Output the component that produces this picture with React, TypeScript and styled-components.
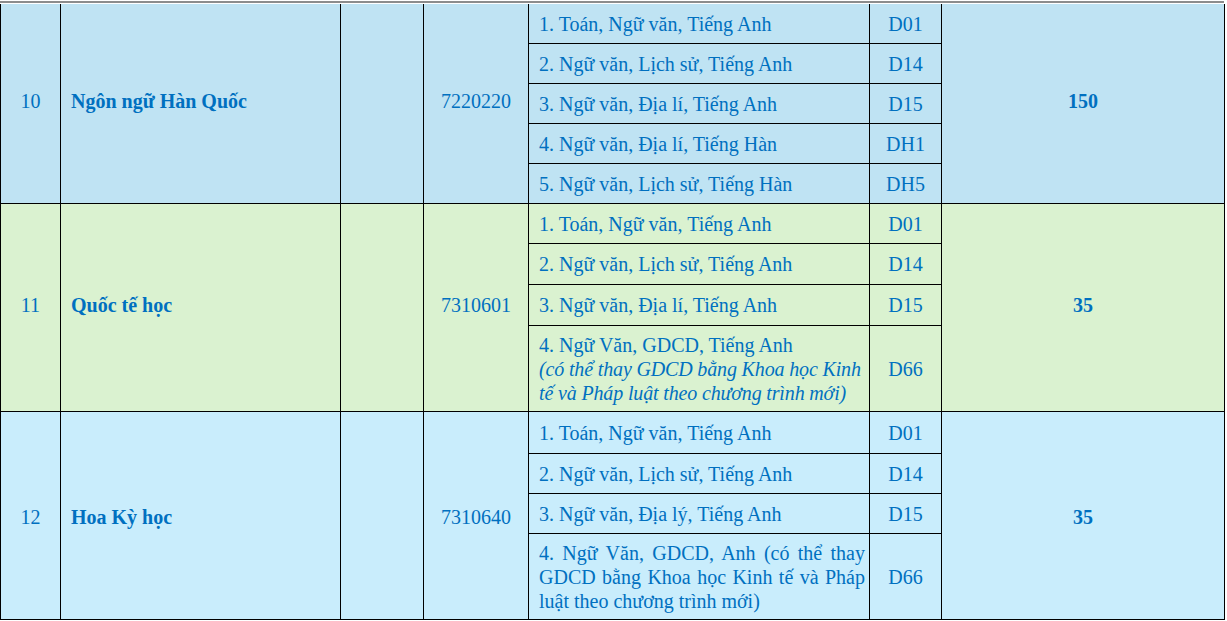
import React from "react";
import styled, { createGlobalStyle } from "styled-components";

type Subject = {
  text: React.ReactNode;
  block: string;
  justify?: boolean;
};

type Group = {
  no: string;
  name: string;
  code: string;
  quota: string;
  bg: string;
  lift: number;
  rows: number[];
  subjects: Subject[];
};

const GlobalStyle = createGlobalStyle`
  html, body {
    margin: 0;
    padding: 0;
    background: #ffffff;
  }
  body {
    font-family: "Liberation Serif", "Times New Roman", serif;
    color: #0070c0;
  }
`;

const groups: Group[] = [
  {
    no: "10",
    name: "Ngôn ngữ Hàn Quốc",
    code: "7220220",
    quota: "150",
    bg: "#bfe3f3",
    lift: 6,
    rows: [40, 40, 40, 40, 40],
    subjects: [
      { text: "1. Toán, Ngữ văn, Tiếng Anh", block: "D01" },
      { text: "2. Ngữ văn, Lịch sử, Tiếng Anh", block: "D14" },
      { text: "3. Ngữ văn, Địa lí, Tiếng Anh", block: "D15" },
      { text: "4. Ngữ văn, Địa lí, Tiếng Hàn", block: "DH1" },
      { text: "5. Ngữ văn, Lịch sử, Tiếng Hàn", block: "DH5" },
    ],
  },
  {
    no: "11",
    name: "Quốc tế học",
    code: "7310601",
    quota: "35",
    bg: "#daf2d0",
    lift: 6,
    rows: [40, 41, 41, 86],
    subjects: [
      { text: "1. Toán, Ngữ văn, Tiếng Anh", block: "D01" },
      { text: "2. Ngữ văn, Lịch sử, Tiếng Anh", block: "D14" },
      { text: "3. Ngữ văn, Địa lí, Tiếng Anh", block: "D15" },
      {
        text: (
          <>
            4. Ngữ Văn, GDCD, Tiếng Anh
            <br />
            <em>
              (có thể thay GDCD bằng Khoa học Kinh tế và Pháp luật theo chương
              trình mới)
            </em>
          </>
        ),
        block: "D66",
      },
    ],
  },
  {
    no: "12",
    name: "Hoa Kỳ học",
    code: "7310640",
    quota: "35",
    bg: "#c9edfc",
    lift: -2,
    rows: [42, 40, 40, 86],
    subjects: [
      { text: "1. Toán, Ngữ văn, Tiếng Anh", block: "D01" },
      { text: "2. Ngữ văn, Lịch sử, Tiếng Anh", block: "D14" },
      { text: "3. Ngữ văn, Địa lý, Tiếng Anh", block: "D15" },
      {
        text: "4. Ngữ Văn, GDCD, Anh (có thể thay GDCD bằng Khoa học Kinh tế và Pháp luật theo chương trình mới)",
        block: "D66",
        justify: true,
      },
    ],
  },
];

export default function App() {
  return (
    <>
      <GlobalStyle />
      <Table>
        <TopRule />
        {groups.map((g) => (
          <GroupGrid
            key={g.no}
            $bg={g.bg}
            $rows={g.rows.map((r) => `${r}px`).join(" ")}
          >
            <SpanCell $col={1} $lift={g.lift} $center>
              {g.no}
            </SpanCell>
            <SpanCell $col={2} $lift={g.lift}>
              <Bold>{g.name}</Bold>
            </SpanCell>
            <SpanCell $col={3} $lift={g.lift} $center />
            <SpanCell $col={4} $lift={g.lift} $center>
              {g.code}
            </SpanCell>
            {g.subjects.map((s, i) => (
              <React.Fragment key={i}>
                <SubjectCell style={{ gridRow: i + 1 }} $justify={s.justify}>
                  <span>{s.text}</span>
                </SubjectCell>
                <BlockCell style={{ gridRow: i + 1 }}>{s.block}</BlockCell>
              </React.Fragment>
            ))}
            <SpanCell $col={7} $lift={g.lift} $center>
              <Bold>{g.quota}</Bold>
            </SpanCell>
          </GroupGrid>
        ))}
      </Table>
    </>
  );
}

const Table = styled.div`
  width: 1225px;
  display: flex;
  flex-direction: column;
  font-size: 20px;
  line-height: 24px;
`;

const TopRule = styled.div`
  height: 4px;
  box-sizing: border-box;
  border-top: 1px solid #ffffff;
  border-bottom: 1px solid #ffffff;
  background: #8c8c8c;
  margin: 0 1px 0 0;
`;

const GroupGrid = styled.div<{ $bg: string; $rows: string }>`
  display: grid;
  grid-template-columns: 60px 280px 83px 105px 341px 72px 283px;
  grid-template-rows: ${(p) => p.$rows};
  background: ${(p) => p.$bg};
  border-left: 1px solid #000000;
`;

const Cell = styled.div`
  box-sizing: border-box;
  border-right: 1px solid #000000;
  border-bottom: 1px solid #000000;
  display: flex;
  align-items: center;
`;

const SpanCell = styled(Cell)<{ $col: number; $lift: number; $center?: boolean }>`
  grid-column: ${(p) => p.$col};
  grid-row: 1 / -1;
  justify-content: ${(p) => (p.$center ? "center" : "flex-start")};
  padding-left: ${(p) => (p.$center ? 0 : 10)}px;
  padding-right: ${(p) => (p.$center ? 0 : 8)}px;
  padding-bottom: ${(p) => Math.max(p.$lift, 0)}px;
  padding-top: ${(p) => Math.max(-p.$lift, 0)}px;
`;

const SubjectCell = styled(Cell)<{ $justify?: boolean }>`
  grid-column: 5;
  padding: 0 4px 0 10px;

  span {
    display: block;
    width: 100%;
    text-align: ${(p) => (p.$justify ? "justify" : "left")};
  }

  em {
    font-style: italic;
    letter-spacing: -0.15px;
  }
`;

const BlockCell = styled(Cell)`
  grid-column: 6;
  justify-content: center;
`;

const Bold = styled.span`
  font-weight: 700;
`;
